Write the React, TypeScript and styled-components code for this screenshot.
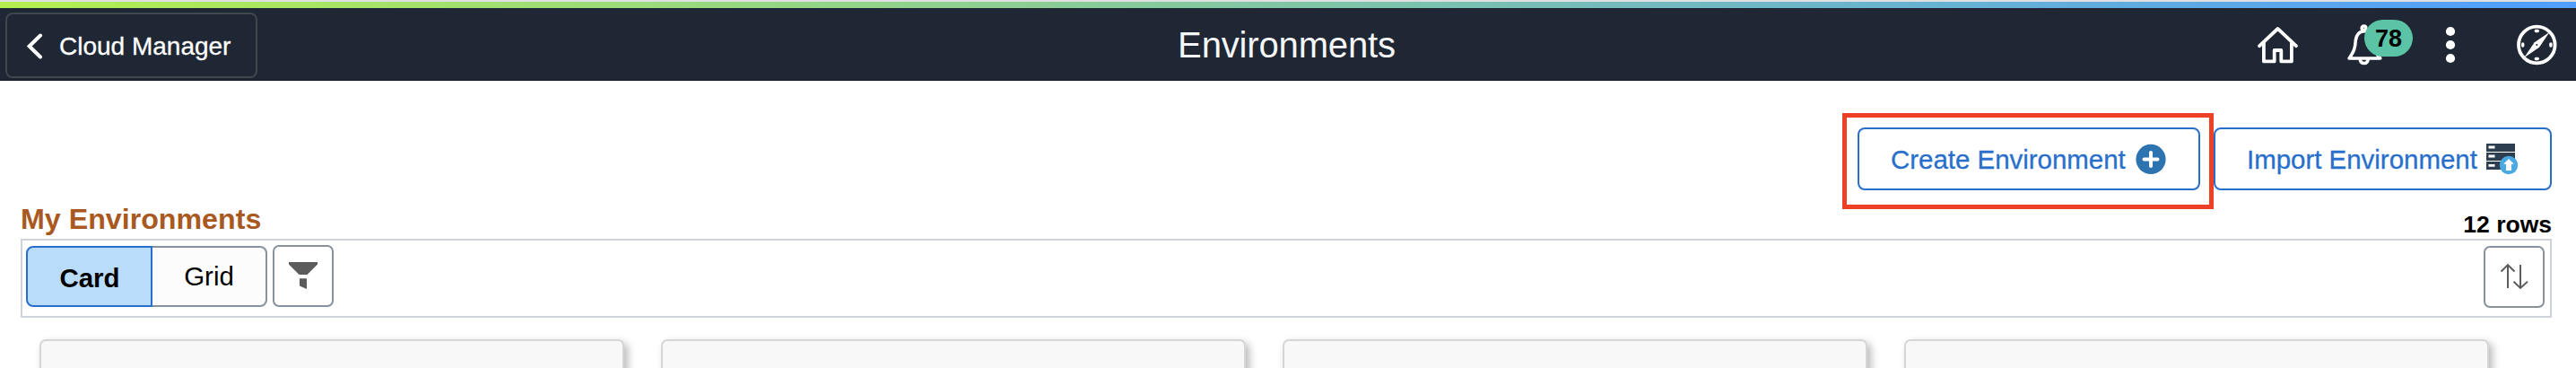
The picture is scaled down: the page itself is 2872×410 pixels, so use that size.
import React from 'react';
import styled, { createGlobalStyle } from 'styled-components';

const GlobalStyle = createGlobalStyle`
  * { box-sizing: border-box; }
  body {
    margin: 0;
    background: #fff;
    font-family: 'Liberation Sans', Arial, Helvetica, sans-serif;
    overflow: hidden;
  }
  button { font-family: inherit; margin: 0; cursor: pointer; }
  svg { display: block; flex: none; }
`;

const Page = styled.div`
  width: 2872px;
  height: 410px;
  overflow: hidden;
`;

const AccentStrip = styled.div`
  height: 9px;
  border-top: 2px solid #e0e0e2;
  background: linear-gradient(90deg, #b4ef50 0%, #80c6a5 50%, #509eff 100%);
  background-clip: padding-box;
`;

const Banner = styled.header`
  height: 81px;
  display: grid;
  grid-template-columns: 1fr auto 1fr;
  background: #1e2733;
  border-bottom: 1px solid #141b29;
`;

const BackButton = styled.button`
  justify-self: start;
  width: 281px;
  height: 73px;
  margin: 5px 0 0 6px;
  padding: 0 0 0 22px;
  display: flex;
  align-items: center;
  gap: 17px;
  border: 2px solid #41474f;
  border-radius: 8px;
  background: transparent;
  color: #fff;
  font-size: 28px;
  line-height: 32px;
  -webkit-text-stroke: 0.3px #fff;
`;

const ButtonLabel = styled.span<{ $drop: number }>`
  padding-top: ${(p) => p.$drop}px;
`;

const BannerTitle = styled.h1`
  margin: 18px 3px 0 0;
  color: #f5f6f8;
  font-size: 40px;
  line-height: 46px;
  font-weight: 400;
  letter-spacing: -0.15px;
`;

const BannerTools = styled.nav`
  justify-self: end;
  display: flex;
  align-items: flex-start;
  padding: 16px 19px 0 0;
`;

const ToolLink = styled.span<{ $gap?: number }>`
  position: relative;
  margin-left: ${(p) => p.$gap ?? 0}px;
`;

const Badge = styled.span`
  position: absolute;
  left: 19px;
  top: -3px;
  width: 54px;
  height: 41px;
  border-radius: 21px;
  background: #5bc4a7;
  color: #000;
  font-size: 27px;
  line-height: 43px;
  font-weight: 700;
  text-align: center;
`;

const Actions = styled.div`
  display: flex;
  justify-content: flex-end;
  padding: 36px 27px 0 0;
`;

const Highlight = styled.div`
  width: 414px;
  height: 107px;
  padding: 11px 10px 0 12px;
  border: 5px solid #ee4027;
`;

const ActionButton = styled.button<{ $width: number; $padding: number; $gap: number }>`
  width: ${(p) => p.$width}px;
  height: 70px;
  padding: 0 0 0 ${(p) => p.$padding}px;
  display: flex;
  align-items: center;
  gap: ${(p) => p.$gap}px;
  border: 2px solid #276fcb;
  border-radius: 8px;
  background: #fff;
  color: #276fcb;
  font-size: 29.44px;
  line-height: 34px;
  white-space: nowrap;
  -webkit-text-stroke: 0.3px #276fcb;
`;

const ImportSlot = styled.div`
  padding-top: 16px;
`;

const SectionHead = styled.div`
  height: 33px;
  padding: 0 27px 0 23px;
  display: flex;
  justify-content: space-between;
`;

const SectionTitle = styled.h2`
  margin: -7px 0 0;
  color: #a9591f;
  font-size: 32.2px;
  line-height: 36px;
  font-weight: 700;
`;

const RowCount = styled.span`
  color: #000;
  font-size: 26.5px;
  line-height: 30px;
  font-weight: 700;
  padding-top: 2px;
`;

const Toolbar = styled.div`
  height: 88px;
  margin: 0 27px 0 23px;
  padding: 5px 6px 0 4px;
  display: flex;
  align-items: flex-start;
  border: 2px solid #ced3db;
`;

const Segment = styled.button<{ $selected?: boolean }>`
  width: ${(p) => (p.$selected ? 141 : 128)}px;
  height: 68px;
  margin-top: 1px;
  padding: ${(p) => (p.$selected ? '3px 0 0 1px' : '0 0 1px')};
  border: 2px solid ${(p) => (p.$selected ? '#276fcb' : '#87929d')};
  border-left-width: ${(p) => (p.$selected ? 2 : 0)}px;
  border-radius: ${(p) => (p.$selected ? '8px 0 0 8px' : '0 8px 8px 0')};
  background: ${(p) => (p.$selected ? '#badcfb' : '#fcfcfc')};
  color: #000;
  font-size: 29.44px;
  line-height: 34px;
  font-weight: ${(p) => (p.$selected ? 700 : 400)};
`;

const IconButton = styled.button<{ $end?: boolean }>`
  width: 68px;
  height: 69px;
  padding: 0;
  margin: ${(p) => (p.$end ? '1px 0 0 auto' : '0 0 0 6px')};
  border: 2px solid #87929d;
  border-radius: 7px;
  background: #fff;
`;

const Cards = styled.div`
  display: grid;
  grid-template-columns: repeat(4, 652px);
  column-gap: 41px;
  padding: 24px 0 0 44px;
`;

const Card = styled.article`
  height: 300px;
  border: 2px solid #d6d6d6;
  border-radius: 7px;
  background: #f8f8f8;
  box-shadow: 4px 4px 10px rgba(0, 0, 0, 0.28);
`;

const ChevronIcon = () => (
  <svg width="19" height="30" viewBox="0 0 19 30" fill="none" stroke="#fff" strokeWidth="4" strokeLinecap="round">
    <path d="M15 3.500 2.700 15.500 15 27.500" />
  </svg>
);

const HomeIcon = () => (
  <svg width="46" height="46" viewBox="0 0 46 46" fill="none" stroke="#fff" strokeWidth="3.8" strokeLinecap="round" strokeLinejoin="round">
    <path d="M3.1 26.2 23.5 7 43.9 26.2" />
    <path d="M7.900 23V43.400H19.700V31H27.300V43.400H38.900V23" />
  </svg>
);

const BellIcon = () => (
  <svg width="40" height="50" viewBox="0 0 40 50" fill="none" stroke="#fff" strokeWidth="3.6" strokeLinecap="round" strokeLinejoin="round">
    <path d="M2.2 40H36.8C34 37 31.5 33 31 28V19C31 13.500 25 9.600 19.500 9.600 13.500 9.600 10 14 9.300 20 8.800 29 7.500 32 2.200 40Z" />
    <circle cx="18.500" cy="6.300" r="2.300" />
    <path d="M14.200 41C15 47 22.500 47 23.200 41" />
  </svg>
);

const MoreIcon = () => (
  <svg width="12" height="50" viewBox="0 0 12 50" fill="#fff">
    <circle cx="6" cy="10" r="5.100" />
    <circle cx="6" cy="25" r="5.100" />
    <circle cx="6" cy="40" r="5.100" />
  </svg>
);

const CompassIcon = () => (
  <svg width="50" height="50" viewBox="0 0 50 50">
    <circle cx="25.300" cy="25" r="20.300" fill="none" stroke="#fff" strokeWidth="3.800" />
    <path d="M39.500 10.800 28 27.700 11.100 39.200 22.600 22.300Z" fill="#fff" />
    <circle cx="25.300" cy="25" r="1" fill="#1e2733" />
    <path d="M24.300 9.500H26.300M24.300 40.500H26.300M9.700 24V26M40.900 24V26" stroke="#fff" strokeWidth="3.400" strokeLinecap="round" />
  </svg>
);

const PlusIcon = () => (
  <svg width="34" height="34" viewBox="0 0 34 34">
    <circle cx="17" cy="17.400" r="16.600" fill="#2d73b0" />
    <path d="M17 9.900V24.900M9.500 17.400H24.500" stroke="#fff" strokeWidth="4" strokeLinecap="round" />
  </svg>
);

const ServerIcon = () => (
  <svg width="36" height="36" viewBox="0 0 36 36">
    <path d="M0 1H32V10H0ZM0 11H32V20H0ZM0 21H32V30H0Z" fill="#2c3e50" />
    <path d="M2.500 5H9.500M2.500 15H9.500M2.500 25.300H9.500" stroke="#fff" strokeWidth="2.800" />
    <circle cx="25" cy="25" r="10.200" fill="#49a9e0" />
    <path d="M25 18 30.800 23.800H28V31H22V23.800H19.200Z" fill="#fff" />
  </svg>
);

const FilterIcon = () => (
  <svg width="64" height="65" viewBox="0 0 64 65" fill="#5c5c5c">
    <path d="M16 17H48V19.500L36.500 31H27.500L16 19.500Z" />
    <path d="M28 35.200H36V47L28 43.500Z" />
  </svg>
);

const SortIcon = () => (
  <svg width="64" height="65" viewBox="0 0 64 65" fill="none" stroke="#5c5c5c" strokeWidth="2">
    <path d="M25 45V20M17.500 26.500 25 19.200 32.500 26.500" />
    <path d="M39 19V44.500M31.500 37.800 39 45 47 37.800" />
  </svg>
);

export default function App() {
  return (
    <Page>
      <GlobalStyle />
      <AccentStrip />
      <Banner>
        <BackButton>
          <ChevronIcon />
          <ButtonLabel $drop={3}>Cloud Manager</ButtonLabel>
        </BackButton>
        <BannerTitle>Environments</BannerTitle>
        <BannerTools>
          <ToolLink><HomeIcon /></ToolLink>
          <ToolLink $gap={55}>
            <BellIcon />
            <Badge>78</Badge>
          </ToolLink>
          <ToolLink $gap={69}><MoreIcon /></ToolLink>
          <ToolLink $gap={65}><CompassIcon /></ToolLink>
        </BannerTools>
      </Banner>
      <Actions>
        <Highlight>
          <ActionButton $width={382} $padding={35} $gap={11}>
            <ButtonLabel $drop={2}>Create Environment</ButtonLabel>
            <PlusIcon />
          </ActionButton>
        </Highlight>
        <ImportSlot>
          <ActionButton $width={377} $padding={35} $gap={10}>
            <ButtonLabel $drop={2}>Import Environment</ButtonLabel>
            <ServerIcon />
          </ActionButton>
        </ImportSlot>
      </Actions>
      <SectionHead>
        <SectionTitle>My Environments</SectionTitle>
        <RowCount>12 rows</RowCount>
      </SectionHead>
      <Toolbar>
        <Segment $selected>Card</Segment>
        <Segment>Grid</Segment>
        <IconButton aria-label="Filter"><FilterIcon /></IconButton>
        <IconButton $end aria-label="Sort"><SortIcon /></IconButton>
      </Toolbar>
      <Cards>
        <Card />
        <Card />
        <Card />
        <Card />
      </Cards>
    </Page>
  );
}
